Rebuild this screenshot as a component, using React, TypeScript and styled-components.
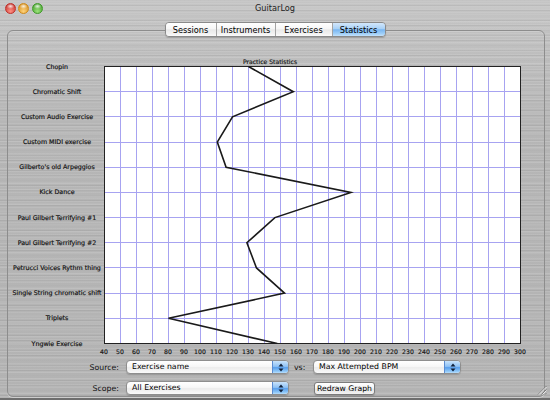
import React from "react";
import styled, { createGlobalStyle } from "styled-components";

const exercises = [
  { name: "Chopin", bpm: 130 },
  { name: "Chromatic Shift", bpm: 158 },
  { name: "Custom Audio Exercise", bpm: 120 },
  { name: "Custom MIDI exercise", bpm: 110.5 },
  { name: "Gilberto's old Arpeggios", bpm: 116 },
  { name: "Kick Dance", bpm: 194 },
  { name: "Paul Gilbert Terrifying #1", bpm: 146.5 },
  { name: "Paul Gilbert Terrifying #2", bpm: 129 },
  { name: "Petrucci Voices Rythm thing", bpm: 135 },
  { name: "Single String chromatic shift", bpm: 152.5 },
  { name: "Triplets", bpm: 80 },
  { name: "Yngwie Exercise", bpm: 148 },
];

const tabs = [
  { label: "Sessions", w: 50 },
  { label: "Instruments", w: 59 },
  { label: "Exercises", w: 57 },
  { label: "Statistics", w: 53, active: true },
];

const ticks = Array.from({ length: 27 }, (_, i) => 40 + i * 10);

const PLOT_W = 417;
const PLOT_H = 278;
const STEP = 277 / 11;

const GlobalStyle = createGlobalStyle`
  html, body { margin: 0; padding: 0; }
  body { width: 550px; height: 400px; overflow: hidden; background: #b8b8b8; }
`;

const Window = styled.div`
  position: relative;
  width: 550px;
  height: 400px;
  box-sizing: border-box;
  display: flex;
  flex-direction: column;
  font-family: "DejaVu Sans", Verdana, sans-serif;
  color: #111;
  border-bottom: 2px solid #6e6e6e;
  background:
    repeating-linear-gradient(180deg, rgba(255, 255, 255, 0.09) 0 1px, transparent 1px 3px),
    repeating-linear-gradient(180deg, rgba(0, 0, 0, 0.05) 0 1px, transparent 1px 5px),
    repeating-linear-gradient(180deg, rgba(255, 255, 255, 0.06) 0 2px, transparent 2px 7px),
    linear-gradient(#c5c5c5, #b6b6b6 30%, #b3b3b3);
`;

const TitleBar = styled.div`
  height: 18px;
  display: grid;
  grid-template-columns: 1fr auto 1fr;
  align-items: start;
`;

const Lights = styled.div`
  display: flex;
  gap: 2.5px;
  padding: 2.5px 0 0 4.5px;
`;

const Light = styled.span<{ $c: string; $d: string }>`
  width: 11px;
  height: 11px;
  border-radius: 50%;
  box-sizing: border-box;
  border: 1px solid ${(p) => p.$d};
  background:
    radial-gradient(ellipse 45% 30% at 50% 25%, rgba(255, 255, 255, 0.85), transparent),
    radial-gradient(circle at 50% 80%, ${(p) => p.$c}, ${(p) => p.$d} 90%);
`;

const Title = styled.div`
  font-size: 8.2px;
  line-height: 16px;
  color: #1e1e1e;
`;

const TabsRow = styled.div`
  position: relative;
  z-index: 1;
  display: flex;
  justify-content: center;
  margin: 4px 0 -7px;
`;

const Segmented = styled.div`
  display: flex;
  height: 15px;
  box-sizing: border-box;
  border: 1px solid #8a8a8a;
  border-radius: 4px;
  overflow: hidden;
  box-shadow: 0 1px 1px rgba(0, 0, 0, 0.18);
`;

const Segment = styled.div<{ $w: number; $active?: boolean }>`
  width: ${(p) => p.$w}px;
  box-sizing: border-box;
  display: flex;
  align-items: center;
  justify-content: center;
  font-size: 8.2px;
  color: #000;
  & + & {
    border-left: 1px solid #a3a3a3;
  }
  background: ${(p) =>
    p.$active
      ? "linear-gradient(#d3e7fb, #a7d0f6 45%, #79b6f1 52%, #9ccdf8 80%, #c3e2fc)"
      : "linear-gradient(#ffffff, #f6f6f6 45%, #e9e9e9 52%, #f1f1f1 80%, #fbfbfb)"};
`;

const Panel = styled.div`
  flex: 1;
  margin: 0 5px 1px 7px;
  border: 1px solid #8d8d8d;
  border-radius: 6px;
  box-shadow: 0 1px 0 rgba(255, 255, 255, 0.35), inset 0 1px 0 rgba(255, 255, 255, 0.2);
  display: flex;
  flex-direction: column;
`;

const ChartView = styled.div`
  width: 520px;
  margin-left: 2px;
`;

const ChartTitle = styled.div`
  margin-top: 26px;
  height: 9px;
  line-height: 9px;
  text-align: center;
  font-size: 6.1px;
  color: #111;
  -webkit-text-stroke: 0.15px #111;
`;

const PlotGrid = styled.div`
  display: grid;
  grid-template-columns: 94px ${PLOT_W}px;
`;

const Labels = styled.div`
  grid-column: 1;
  grid-row: 1;
  align-self: start;
  height: ${STEP * 12}px;
  margin: ${-STEP / 2}px 0;
  display: flex;
  flex-direction: column;
`;

const Label = styled.div`
  flex: 1;
  display: flex;
  align-items: center;
  justify-content: center;
  font-size: 6.3px;
  white-space: nowrap;
  color: #111;
  -webkit-text-stroke: 0.18px #111;
`;

const Plot = styled.svg`
  grid-column: 2;
  grid-row: 1;
  display: block;
`;

const AxisRow = styled.div`
  grid-column: 2;
  grid-row: 2;
  margin-left: -8px;
  height: 14px;
  display: flex;
  align-items: center;
`;

const Tick = styled.span`
  flex: none;
  width: 16px;
  text-align: center;
  font-size: 6.2px;
  color: #111;
  -webkit-text-stroke: 0.15px #111;
`;

const Controls = styled.div`
  display: grid;
  grid-template-columns: 118px 168px 19px 148px;
  grid-auto-rows: 14px;
  row-gap: 7px;
  align-items: center;
  margin-top: 2px;
  font-size: 7.8px;
`;

const FieldLabel = styled.div`
  text-align: right;
  padding-right: 7px;
  color: #111;
`;

const Vs = styled.div`
  color: #111;
`;

const Popup = styled.div<{ $w: number }>`
  width: ${(p) => p.$w}px;
  height: 14px;
  box-sizing: border-box;
  display: flex;
  border: 1px solid #8e8e8e;
  border-radius: 4px;
  overflow: hidden;
  box-shadow: 0 1px 1px rgba(0, 0, 0, 0.15);
  background: linear-gradient(#ffffff, #f7f7f7 45%, #ececec 55%, #fafafa);
`;

const PopupText = styled.span`
  flex: 1;
  padding-left: 5px;
  line-height: 12px;
  color: #000;
  white-space: nowrap;
`;

const PopupArrows = styled.span`
  width: 15px;
  display: flex;
  align-items: center;
  justify-content: center;
  border-left: 1px solid #5a8bd0;
  background: linear-gradient(#c9e3fb, #8fc2f5 45%, #5a9fec 55%, #8cc6f8 85%, #b9defc);
`;

const Button = styled.div`
  grid-column: 4;
  width: 61px;
  height: 13px;
  margin-left: 1px;
  box-sizing: border-box;
  border: 1px solid #7b7b7b;
  border-radius: 3px;
  display: flex;
  align-items: center;
  justify-content: center;
  font-size: 7.7px;
  color: #000;
  box-shadow: 0 1px 1px rgba(0, 0, 0, 0.15);
  background: linear-gradient(#ffffff, #f4f4f4 45%, #e4e4e4 55%, #f3f3f3);
`;

const Grip = styled.svg`
  position: absolute;
  right: 3px;
  bottom: 3px;
`;

const Arrows = () => (
  <svg width="6" height="9" viewBox="0 0 6 9">
    <path d="M3 0.5 L5.5 3.5 L0.5 3.5 Z" fill="#10203a" />
    <path d="M3 8.5 L5.5 5.5 L0.5 5.5 Z" fill="#10203a" />
  </svg>
);

const Chart = () => {
  const xOf = (v: number) => 0.5 + (v - 40) * 1.6;
  const points = exercises
    .map((e, i) => `${xOf(e.bpm)},${0.5 + i * STEP}`)
    .join(" ");
  return (
    <Plot width={PLOT_W} height={PLOT_H} viewBox={`0 0 ${PLOT_W} ${PLOT_H}`}>
      <rect x="0" y="0" width={PLOT_W} height={PLOT_H} fill="#fff" />
      {Array.from({ length: 25 }, (_, k) => (
        <line
          key={"v" + k}
          x1={0.5 + 16 * (k + 1)}
          x2={0.5 + 16 * (k + 1)}
          y1="0"
          y2={PLOT_H}
          stroke="#a7a3f1"
          strokeWidth="1"
        />
      ))}
      {Array.from({ length: 10 }, (_, k) => {
        const y = Math.round(STEP * (k + 1)) + 0.5;
        return (
          <line key={"h" + k} x1="0" x2={PLOT_W} y1={y} y2={y} stroke="#a7a3f1" strokeWidth="1" />
        );
      })}
      <rect x="0.5" y="0.5" width={PLOT_W - 1} height={PLOT_H - 1} fill="none" stroke="#222" />
      <polyline points={points} fill="none" stroke="#1a1a1a" strokeWidth="1.6" strokeLinejoin="miter" />
    </Plot>
  );
};

export default function App() {
  return (
    <>
      <GlobalStyle />
      <Window>
        <TitleBar>
          <Lights>
            <Light $c="#ff8f82" $d="#c0302a" />
            <Light $c="#ffd27a" $d="#d08a18" />
            <Light $c="#9be27a" $d="#3f9a28" />
          </Lights>
          <Title>GuitarLog</Title>
          <span />
        </TitleBar>
        <TabsRow>
          <Segmented>
            {tabs.map((t) => (
              <Segment key={t.label} $w={t.w} $active={t.active}>
                {t.label}
              </Segment>
            ))}
          </Segmented>
        </TabsRow>
        <Panel>
          <ChartView>
            <ChartTitle>Practice Statistics</ChartTitle>
            <PlotGrid>
              <Labels>
                {exercises.map((e) => (
                  <Label key={e.name}>{e.name}</Label>
                ))}
              </Labels>
              <Chart />
              <AxisRow>
                {ticks.map((t) => (
                  <Tick key={t}>{t}</Tick>
                ))}
              </AxisRow>
            </PlotGrid>
          </ChartView>
          <Controls>
            <FieldLabel>Source:</FieldLabel>
            <Popup $w={163}>
              <PopupText>Exercise name</PopupText>
              <PopupArrows>
                <Arrows />
              </PopupArrows>
            </Popup>
            <Vs>vs:</Vs>
            <Popup $w={148}>
              <PopupText>Max Attempted BPM</PopupText>
              <PopupArrows>
                <Arrows />
              </PopupArrows>
            </Popup>
            <FieldLabel>Scope:</FieldLabel>
            <Popup $w={163}>
              <PopupText>All Exercises</PopupText>
              <PopupArrows>
                <Arrows />
              </PopupArrows>
            </Popup>
            <Button>Redraw Graph</Button>
          </Controls>
        </Panel>
        <Grip width="11" height="11" viewBox="0 0 11 11">
          <path d="M10.5 2 L2 10.5 M10.5 5.5 L5.5 10.5 M10.5 9 L9 10.5" stroke="#7d7d7d" strokeWidth="1" />
          <path d="M10.5 3 L3 10.5 M10.5 6.5 L6.5 10.5" stroke="#eaeaea" strokeWidth="1" />
        </Grip>
      </Window>
    </>
  );
}
